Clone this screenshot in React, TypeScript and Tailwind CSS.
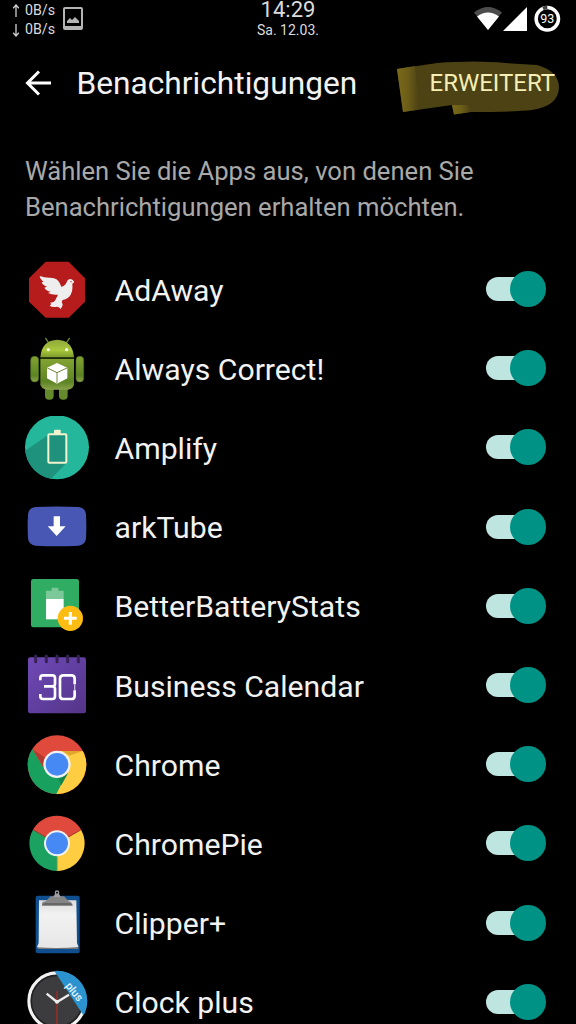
import { useState, type ReactNode } from "react";

const AdAwayIcon = () => (
  <svg viewBox="45 23 192 192" className="size-16">
    <path d="M107 34H176L225 84V154L176 202H107L57 154V84Z" fill="#b71c1c" />
    <path
      d="M89 77Q105 83 122 82Q143 83 149 98L154 109Q165 108 170 96Q173 86 182 86Q189 87 193 95L187 100Q189 120 182 133Q176 144 158 149Q153 154 158 162Q159 168 152 176Q146 168 137 170Q126 171 119 166L124 161L120 157Q132 157 136 149L144 133Q128 135 114 128L122 124Q108 121 103 112L111 109Q97 104 95 96L101 94Q90 87 89 77Z"
      fill="#eeeeee"
    />
    <circle cx="183" cy="94" r="2" fill="#b71c1c" />
  </svg>
);

const AndroidIcon = () => (
  <svg viewBox="45 260 192 192" className="size-16">
    <defs>
      <linearGradient id="droid-head" x1="0" y1="0" x2="0" y2="1">
        <stop offset="0" stopColor="#8fa93b" />
        <stop offset="0.6" stopColor="#a9c83c" />
        <stop offset="1" stopColor="#7c9a2c" />
      </linearGradient>
      <linearGradient id="droid-body" x1="0" y1="0" x2="0" y2="1">
        <stop offset="0" stopColor="#83a332" />
        <stop offset="0.75" stopColor="#5d8424" />
        <stop offset="1" stopColor="#8ba34b" />
      </linearGradient>
    </defs>
    <path d="M107 264L117 279M178 264L168 279" stroke="#6c8a35" strokeWidth="4" strokeLinecap="round" />
    <rect x="105" y="402" width="26" height="46" rx="12" fill="#648a2b" />
    <rect x="147" y="402" width="26" height="46" rx="12" fill="#648a2b" />
    <rect x="62" y="318" width="24" height="77" rx="12" fill="url(#droid-body)" stroke="#496b1d" strokeWidth="2" />
    <rect x="198" y="318" width="23" height="77" rx="11" fill="url(#droid-body)" stroke="#496b1d" strokeWidth="2" />
    <path d="M91 321Q95 270 142 268Q188 270 192 321Z" fill="url(#droid-head)" />
    <path d="M91 326H192V402Q190 417 174 418H110Q93 417 91 402Z" fill="url(#droid-body)" />
    <path d="M91 323H192" stroke="#3d5617" strokeWidth="3" />
    <circle cx="115" cy="298" r="5" fill="#f3f8dc" />
    <circle cx="170" cy="298" r="5" fill="#f3f8dc" />
    <path d="M141 338L172 352V384L141 400L111 384V352Z" fill="#fff" />
    <path d="M112 353L141 367L171 353M141 367V399" fill="none" stroke="#71863c" strokeWidth="3" />
  </svg>
);

const AmplifyIcon = () => (
  <svg viewBox="45 18 192 192" className="size-16">
    <defs>
      <clipPath id="amplify-clip">
        <circle cx="141" cy="112" r="96" />
      </clipPath>
    </defs>
    <circle cx="141" cy="112" r="96" fill="#25b79c" />
    <path clipPath="url(#amplify-clip)" d="M114 76L40 126V215H115L170 158Z" fill="#1f927d" />
    <rect x="115" y="73" width="54" height="85" rx="3" fill="#1f927d" stroke="#f1f3cf" strokeWidth="6" />
    <path d="M132 72V61Q132 59 135 59H149Q152 59 152 61V72Z" fill="#f1f3cf" />
  </svg>
);

const ArkTubeIcon = () => (
  <svg viewBox="45 256 192 192" className="size-16">
    <path
      d="M76 292Q141 289 206 292Q227 294 228 316Q230 350 228 385Q227 405 206 408Q141 411 76 408Q55 405 54 385Q52 350 54 316Q55 294 76 292Z"
      fill="#4757b3"
    />
    <path d="M131 320H150V350H167L140 379L113 350H131Z" fill="#fff" />
  </svg>
);

const BatteryStatsIcon = () => (
  <svg viewBox="45 28 192 192" className="size-16">
    <rect x="63" y="43" width="144" height="145" rx="7" fill="#30ad62" />
    <path d="M108 103V78H125V69H145V78H161V103Z" fill="#7dc899" />
    <path d="M108 103H161V164H108Z" fill="#fff" />
    <circle cx="181" cy="161" r="38" fill="#fdbc13" />
    <path d="M181 142V180M162 161H200" stroke="#fff" strokeWidth="9" />
  </svg>
);

const CalendarIcon = () => (
  <svg viewBox="45 266 192 192" className="size-16">
    <defs>
      <linearGradient id="calendar-bg" x1="0" y1="0" x2="1" y2="1">
        <stop offset="0" stopColor="#7049b5" />
        <stop offset="0.5" stopColor="#603fa0" />
        <stop offset="1" stopColor="#543587" />
      </linearGradient>
    </defs>
    <rect x="54" y="276" width="174" height="168" rx="7" fill="url(#calendar-bg)" />
    <path
      d="M77 272V289M109 272V289M141 272V289M173 272V289M205 272V289"
      stroke="#372155"
      strokeWidth="9"
      strokeLinecap="round"
    />
    <path
      d="M91 345V338Q91 330 99 330H127Q135 330 135 338V355Q135 363 127 363H102M127 363Q135 363 135 371V392Q135 401 127 401H99Q91 401 91 393V386M194 357V340Q194 330 184 330H160Q150 330 150 340V391Q150 401 160 401H184Q194 401 194 391V375"
      fill="none"
      stroke="#fff"
      strokeWidth="8"
    />
    <path d="M194 357V375" stroke="#c8b6e4" strokeWidth="4" />
  </svg>
);

const ChromeIcon = () => (
  <svg viewBox="45 23 192 192" className="size-16">
    <defs>
      <clipPath id="chrome-clip">
        <circle cx="141" cy="118" r="88" />
      </clipPath>
    </defs>
    <g clipPath="url(#chrome-clip)">
      <rect x="50" y="25" width="185" height="185" fill="#e04a3c" />
      <path d="M141 77H235V210H135L175 139Z" fill="#ffcd41" />
      <path d="M66 70L107 138L168 148L137 210H45V70Z" fill="#17a05e" />
      <path d="M68 72L106 98L102 128Z" fill="#b23a31" />
      <path d="M157 77H218L178 91Z" fill="#dfa82d" />
      <path d="M145 158L174 144L154 180Z" fill="#11834b" />
    </g>
    <circle cx="141" cy="117" r="41" fill="#f1f1f1" />
    <circle cx="141" cy="117" r="34" fill="#4688f4" />
  </svg>
);

const ChromePieIcon = () => (
  <svg viewBox="45 261 192 192" className="size-16">
    <path d="M141 355L69 314A83 83 0 0 1 213 314Z" fill="#e04a3c" />
    <path d="M141 355L213 314A83 83 0 0 1 141 438Z" fill="#ffcd41" />
    <path d="M141 355V438A83 83 0 0 1 69 314Z" fill="#1ba261" />
    <path d="M70 315L107 336M212 315L175 336" stroke="#a93a2d" strokeWidth="3" />
    <path d="M142 390V437" stroke="#c99a2c" strokeWidth="3" />
    <circle cx="141" cy="355" r="39" fill="#f1f1f1" />
    <circle cx="141" cy="355" r="33" fill="#4688f4" />
  </svg>
);

const ClipperIcon = () => (
  <svg viewBox="45 34 192 192" className="size-16 overflow-visible">
    <defs>
      <linearGradient id="paper" x1="0" y1="0" x2="0" y2="1">
        <stop offset="0" stopColor="#dcdcdc" />
        <stop offset="0.3" stopColor="#f2f2f2" />
        <stop offset="1" stopColor="#e6e6e6" />
      </linearGradient>
    </defs>
    <rect x="77" y="48" width="132" height="173" rx="6" fill="#0f4f8f" />
    <path d="M82 198L205 196V208H84Z" fill="#777" />
    <path d="M87 62H199L201 190L205 202Q145 208 81 203L86 190Z" fill="url(#paper)" />
    <path d="M96 78V70Q98 66 107 65L122 50H162L176 65Q187 67 188 78Z" fill="#858585" />
    <path d="M96 77H188L180 70H104Z" fill="#666" />
    <path d="M130 52L135 42H147L152 52Z" fill="#a0a0a0" />
    <circle cx="141" cy="39" r="5" fill="none" stroke="#9c9c9c" strokeWidth="4" />
  </svg>
);

const ClockIcon = () => (
  <svg viewBox="45 271 192 192" className="size-16">
    <defs>
      <clipPath id="clock-clip">
        <circle cx="141" cy="364" r="91" />
      </clipPath>
    </defs>
    <circle cx="141" cy="364" r="84" fill="#3c3c3e" stroke="#f2f2f2" strokeWidth="10" />
    <circle cx="141" cy="364" r="77" fill="none" stroke="#232323" strokeWidth="5" />
    <path d="M110 342L141 367L177 345" fill="none" stroke="#ececec" strokeWidth="7" />
    <path d="M141 335V440" stroke="#ab2922" strokeWidth="4" />
    <circle cx="141" cy="366" r="6" fill="#ececec" />
    <path clipPath="url(#clock-clip)" d="M131 271H240V408L221 408Z" fill="#2b93cf" />
    <text
      transform="translate(165 319) rotate(51)"
      fill="#e8f6ff"
      fontSize="33"
      fontWeight="500"
      fontFamily="Roboto, sans-serif"
      textLength="62"
    >
      plus
    </text>
  </svg>
);

interface AppItem {
  name: string;
  icon: ReactNode;
}

const apps: AppItem[] = [
  { name: "AdAway", icon: <AdAwayIcon /> },
  { name: "Always Correct!", icon: <AndroidIcon /> },
  { name: "Amplify", icon: <AmplifyIcon /> },
  { name: "arkTube", icon: <ArkTubeIcon /> },
  { name: "BetterBatteryStats", icon: <BatteryStatsIcon /> },
  { name: "Business Calendar", icon: <CalendarIcon /> },
  { name: "Chrome", icon: <ChromeIcon /> },
  { name: "ChromePie", icon: <ChromePieIcon /> },
  { name: "Clipper+", icon: <ClipperIcon /> },
  { name: "Clock plus", icon: <ClockIcon /> },
];

const Toggle = ({ on, onClick, label }: { on: boolean; onClick: () => void; label: string }) => (
  <button
    role="switch"
    aria-checked={on}
    aria-label={label}
    onClick={onClick}
    className={`-mt-px flex h-6 w-[60.5px] items-center rounded-full ${on ? "justify-end" : "justify-start"}`}
  >
    <span className={`h-6 w-11 shrink-0 rounded-full ${on ? "bg-[#bfe5e1]" : "bg-gray-600"}`} />
    <span className={`-ml-5 size-9 shrink-0 rounded-full ${on ? "bg-[#009385]" : "bg-gray-400"}`} />
  </button>
);

const StatusBar = () => (
  <div className="grid h-10 grid-cols-[1fr_auto_1fr] text-[#dcdcdc]">
    <div className="flex pl-3">
      <div className="pt-px text-[14.2px] leading-[19px]">
        {["M4 1V14M1 4.5L4 1L7 4.5", "M4 1V14M1 10.5L4 14L7 10.5"].map((d) => (
          <div key={d} className="flex items-center gap-[5px]">
            <svg viewBox="0 0 8 15" className="h-[14px] w-2 shrink-0" fill="none" stroke="#cfcfcf" strokeWidth="1.4">
              <path d={d} />
            </svg>
            <span>0B/s</span>
          </div>
        ))}
      </div>
      <svg viewBox="0 0 20 23" className="mt-[7px] ml-[7.5px] h-[23px] w-5">
        <path d="M2 0H18Q20 0 20 2V21Q20 23 18 23H2Q0 23 0 21V2Q0 0 2 0ZM2 2V19H18V2Z" fill="#b4b4b4" fillRule="evenodd" />
        <path d="M4 16V14L7 11L9 13L12 10L16 14V16Z" fill="#b4b4b4" />
      </svg>
    </div>
    <div className="text-center">
      <div className="text-[22px] leading-5">14:29</div>
      <div className="pt-[2px] text-[14px] leading-[17px]">Sa. 12.03.</div>
    </div>
    <div className="flex justify-end pr-[15px]">
      <svg viewBox="0 0 88 33" className="h-[33px] w-[88px]">
        <path d="M1 12.5Q15 1.500 29 12.5L15 30Z" fill="#4c4c4c" />
        <path d="M4 16.5Q15 8.5 26 16.5L15 30Z" fill="#fff" />
        <path d="M54 7V31H30Z" fill="#fff" />
        <circle cx="74.3" cy="18.8" r="11.2" fill="none" stroke="#fff" strokeWidth="3.500" />
        <path d="M70 8.5A11.2 11.2 0 0 1 74.300 7.600" fill="none" stroke="#444" strokeWidth="3.500" />
        <text x="74.3" y="23.2" textAnchor="middle" fontFamily="Roboto, sans-serif" fontSize="12.5" fill="#fff">
          93
        </text>
      </svg>
    </div>
  </div>
);

const Header = () => (
  <header className="flex h-[88px] items-center pl-[25px]">
    <svg viewBox="0 0 26 26" className="mb-[2px] h-[26px] w-[26px]" fill="none" stroke="#fff" strokeWidth="3">
      <path d="M26 13H2.5M14 1.5L2.5 13L14 24.5" />
    </svg>
    <h1 className="ml-[25.5px] flex-1 text-[31.7px] leading-10">Benachrichtigungen</h1>
    <div className="relative mt-2 mr-[15px] h-[56px] w-[164px]">
      <svg viewBox="0 0 164 56" className="absolute inset-0 h-full w-full">
        <defs>
          <linearGradient id="marker-edge">
            <stop offset="0" stopColor="#7b6a1b" />
            <stop offset="0.5" stopColor="#6c5d18" />
            <stop offset="1" stopColor="#4c4213" />
          </linearGradient>
        </defs>
        <path
          d="M0 9L40 3Q80 0 108 3L140 5Q162 11 162 28Q161 46 135 50Q115 52 73 52L57 54.5L55 45L6 52Z"
          fill="#4c4213"
        />
        <path d="M0 9L18 6L22 49.5L6 52Z" fill="url(#marker-edge)" />
        <path d="M55 45L71 45L74 52L57 54.5Z" fill="url(#marker-edge)" />
      </svg>
      <button className="relative mt-[8px] ml-[32.5px] text-[24px] leading-[30px] whitespace-nowrap text-[#f5efb5]">
        ERWEITERT
      </button>
    </div>
  </header>
);

const App = () => {
  const [disabled, setDisabled] = useState<string[]>([]);

  const toggleApp = (name: string) =>
    setDisabled((prev) => (prev.includes(name) ? prev.filter((n) => n !== name) : [...prev, name]));

  return (
    <main className="h-[1024px] w-[576px] overflow-hidden bg-black font-[Roboto,sans-serif] text-[#f2f2f2]">
      <StatusBar />
      <Header />
      <p className="h-[122px] px-[25px] pt-[25px] text-[25.6px] leading-9 whitespace-nowrap text-[#a9a9a9]">
        Wählen Sie die Apps aus, von denen Sie
        <br />
        Benachrichtigungen erhalten möchten.
      </p>
      <ul>
        {apps.map((app) => (
          <li key={app.name} className="flex h-[79.2px] items-center pr-[30.5px] pl-[25px]">
            {app.icon}
            <span className="ml-[25.5px] flex-1 pt-[2px] text-[30.2px] leading-9">{app.name}</span>
            <Toggle on={!disabled.includes(app.name)} onClick={() => toggleApp(app.name)} label={app.name} />
          </li>
        ))}
      </ul>
    </main>
  );
};

export default App;
